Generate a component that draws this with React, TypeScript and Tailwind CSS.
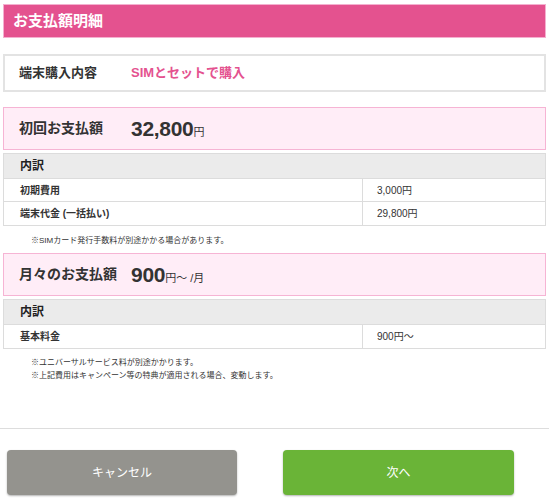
import React from "react";

const font = { fontFamily: '"Liberation Sans", "Noto Sans CJK JP", sans-serif' };

function Breakdown({ rows }: { rows: [string, string][] }) {
  return (
    <div className="border border-[#dcdcdc] mt-[3px]">
      <div className="h-[25px] bg-[#ebebeb] flex items-center pl-[16px] text-[12px] font-bold text-[#222] border-b border-[#dcdcdc]">
        内訳
      </div>
      {rows.map(([k, v], i) => (
        <div
          key={k}
          className={`flex h-[23px] ${i < rows.length - 1 ? "border-b border-[#dcdcdc]" : ""}`}
        >
          <div className="w-[359px] border-r border-[#dcdcdc] flex items-center pl-[16px] text-[10px] font-bold text-[#333]">
            {k}
          </div>
          <div className="flex-1 flex items-center pl-[14px] text-[10px] text-[#333]">{v}</div>
        </div>
      ))}
    </div>
  );
}

function PinkBox({ label, children }: { label: string; children: React.ReactNode }) {
  return (
    <div className="h-[43px] bg-[#ffedf7] border border-[#f6b4d4] flex items-center pl-[15px]">
      <div className="w-[112px] text-[14px] font-bold text-[#333]">{label}</div>
      <div className="flex items-baseline text-[#333] font-bold">{children}</div>
    </div>
  );
}

export default function App() {
  return (
    <div className="w-[549px] h-[500px] bg-white px-[3px] pt-[4px] relative" style={font}>
      <div className="h-[34px] bg-[#e4528f] border border-[#f4b0cf] flex items-center pl-[9px] text-white text-[15px] font-bold">
        お支払額明細
      </div>

      <div className="mt-[16px] h-[38px] border-2 border-[#e3e3e3] flex items-center pl-[14px]">
        <div className="w-[112px] text-[13px] font-bold text-[#333]">端末購入内容</div>
        <div className="text-[13px] font-bold text-[#e4528f]">SIMとセットで購入</div>
      </div>

      <div className="mt-[15px]">
        <PinkBox label="初回お支払額">
          <span className="text-[21px] tracking-[-0.3px]">32,800</span>
          <span className="text-[11px] font-normal">円</span>
        </PinkBox>
      </div>
      <Breakdown
        rows={[
          ["初期費用", "3,000円"],
          ["端末代金 (一括払い)", "29,800円"],
        ]}
      />
      <div className="mt-[8px] pl-[28px] text-[8px] leading-[13px] text-[#333]">
        ※SIMカード発行手数料が別途かかる場合があります。
      </div>

      <div className="mt-[6px]">
        <PinkBox label="月々のお支払額">
          <span className="text-[21px] tracking-[-0.3px]">900</span>
          <span className="text-[11px] font-normal">円〜 /月</span>
        </PinkBox>
      </div>
      <Breakdown rows={[["基本料金", "900円〜"]]} />
      <div className="mt-[7px] pl-[28px] text-[8px] leading-[13px] text-[#333]">
        <div>※ユニバーサルサービス料が別途かかります。</div>
        <div>※上記費用はキャンペーン等の特典が適用される場合、変動します。</div>
      </div>

      <div className="absolute left-0 right-0 top-[428px] border-t border-[#dddddd]" />

      <div className="absolute top-[450px] left-[7px] flex gap-[46px]">
        <div className="w-[230px] h-[45px] rounded-[4px] bg-[#94938e] shadow-[0_1px_2px_rgba(0,0,0,0.3)] flex items-center justify-center text-white text-[12px]">
          キャンセル
        </div>
        <div className="w-[231px] h-[45px] rounded-[4px] bg-[#6ab437] shadow-[0_1px_2px_rgba(0,0,0,0.3)] flex items-center justify-center text-white text-[12px]">
          次へ
        </div>
      </div>
    </div>
  );
}
